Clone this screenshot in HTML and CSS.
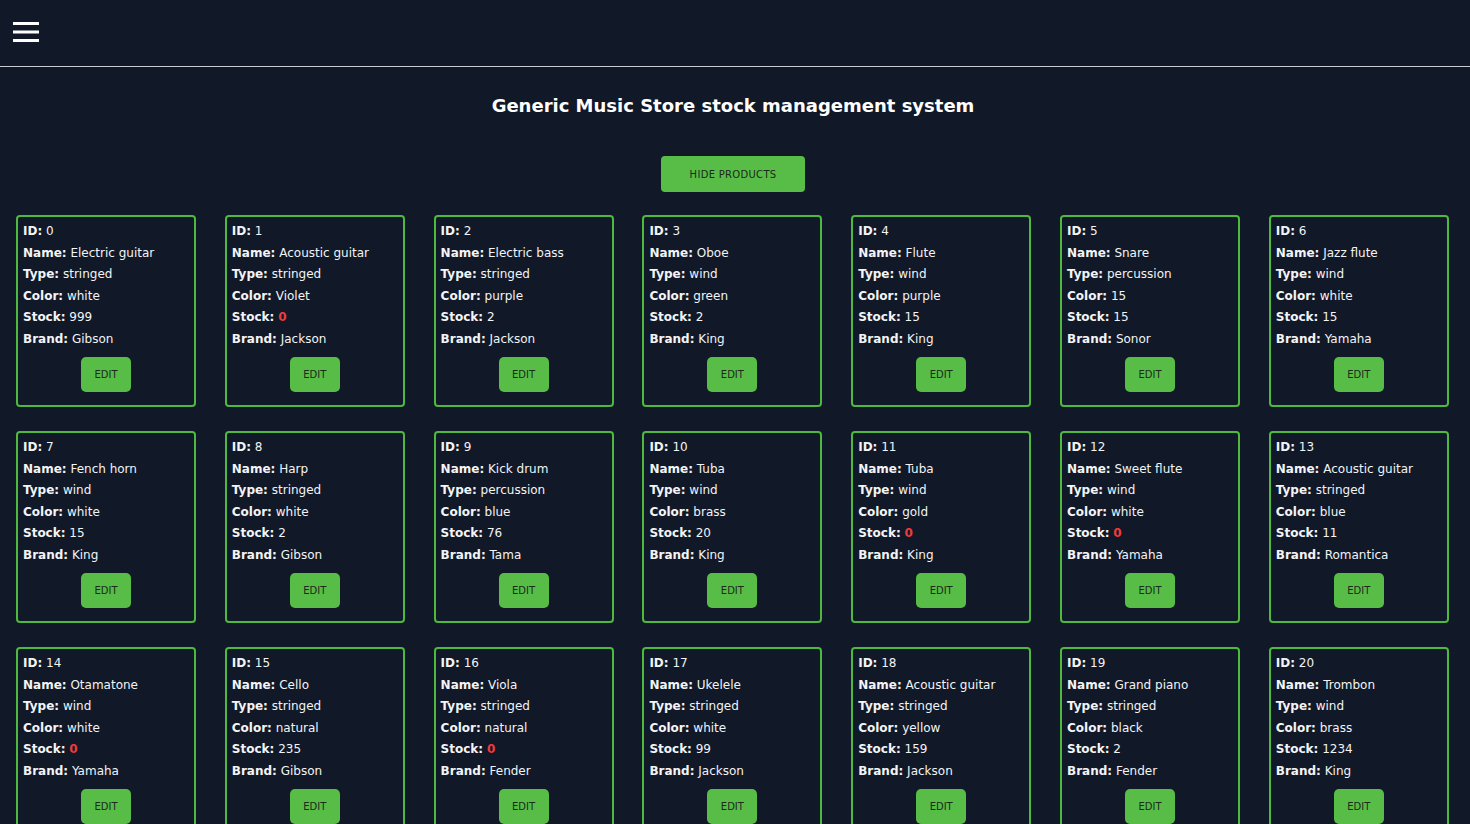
FILE: index.html
```html
<!DOCTYPE html>
<html>
<head>
<meta charset="utf-8">
<link rel="stylesheet" href="styles.css">
</head>
<body>
<header class="topbar">
  <button class="menu" aria-label="menu">
    <svg width="26" height="21" viewBox="0 0 26 21"><rect x="0" y="0" width="26" height="3" fill="#fff"/><rect x="0" y="8.5" width="26" height="3" fill="#fff"/><rect x="0" y="17" width="26" height="3" fill="#fff"/></svg>
  </button>
</header>
<main class="content">
  <h1 class="title">Generic Music Store stock management system</h1>
  <div class="actions"><button class="btn btn-main">HIDE PRODUCTS</button></div>
  <section class="grid" id="grid"></section>
</main>
<script>
const items = [
 [0,"Electric guitar","stringed","white",999,"Gibson"],
 [1,"Acoustic guitar","stringed","Violet",0,"Jackson"],
 [2,"Electric bass","stringed","purple",2,"Jackson"],
 [3,"Oboe","wind","green",2,"King"],
 [4,"Flute","wind","purple",15,"King"],
 [5,"Snare","percussion","15",15,"Sonor"],
 [6,"Jazz flute","wind","white",15,"Yamaha"],
 [7,"Fench horn","wind","white",15,"King"],
 [8,"Harp","stringed","white",2,"Gibson"],
 [9,"Kick drum","percussion","blue",76,"Tama"],
 [10,"Tuba","wind","brass",20,"King"],
 [11,"Tuba","wind","gold",0,"King"],
 [12,"Sweet flute","wind","white",0,"Yamaha"],
 [13,"Acoustic guitar","stringed","blue",11,"Romantica"],
 [14,"Otamatone","wind","white",0,"Yamaha"],
 [15,"Cello","stringed","natural",235,"Gibson"],
 [16,"Viola","stringed","natural",0,"Fender"],
 [17,"Ukelele","stringed","white",99,"Jackson"],
 [18,"Acoustic guitar","stringed","yellow",159,"Jackson"],
 [19,"Grand piano","stringed","black",2,"Fender"],
 [20,"Trombon","wind","brass",1234,"King"]
];
const grid = document.getElementById('grid');
grid.innerHTML = items.map(([id,n,t,c,s,b]) => `
 <article class="card">
  <p><b>ID:</b> ${id}</p>
  <p><b>Name:</b> ${n}</p>
  <p><b>Type:</b> ${t}</p>
  <p><b>Color:</b> ${c}</p>
  <p><b>Stock:</b> <span class="${s===0?'out':''}">${s}</span></p>
  <p><b>Brand:</b> ${b}</p>
  <div class="card-actions"><button class="btn btn-edit">EDIT</button></div>
 </article>`).join('');
</script>
</body>
</html>
```
FILE: styles.css
```css
html, body { margin: 0; padding: 0; }
body {
  background: #111827;
  color: #f3f4f6;
  font-family: "DejaVu Sans", "Open Sans", sans-serif;
}
.topbar {
  height: 66px;
  border-bottom: 1px solid #c9cbd0;
  display: flex;
  align-items: center;
  padding-left: 13px;
}
.menu {
  background: none;
  border: 0;
  padding: 0;
  margin-top: -2px;
  display: flex;
}
.content {
  padding-right: 4px;
}
.title {
  margin: 27px 0 0;
  text-align: center;
  font-size: 18px;
  font-weight: bold;
  line-height: 24px;
  color: #fff;
}
.actions {
  display: flex;
  justify-content: center;
  margin-top: 38px;
}
.btn {
  background: #58bd47;
  border: 0;
  border-radius: 4px;
  color: #1b2a1b;
  font-family: inherit;
  cursor: pointer;
}
.btn-main {
  width: 144px;
  height: 36px;
  font-size: 10px;
  letter-spacing: 0.3px;
}
.grid {
  display: grid;
  grid-template-columns: repeat(7, 180px);
  column-gap: 28.8px;
  row-gap: 24px;
  padding: 23px 17px 0 16px;
}
.card {
  border: 2px solid #4fb83f;
  border-radius: 4px;
  height: 192px;
  box-sizing: border-box;
  padding: 4px 5px 0;
}
.card p {
  margin: 0;
  font-size: 12px;
  line-height: 21.5px;
  white-space: nowrap;
}
.card b { font-weight: bold; }
.out { color: #ef3b3b; font-weight: bold; }
.card-actions {
  display: flex;
  justify-content: center;
  margin-top: 7px;
}
.btn-edit {
  width: 50px;
  height: 35px;
  border-radius: 5px;
  font-size: 10px;
}
```
